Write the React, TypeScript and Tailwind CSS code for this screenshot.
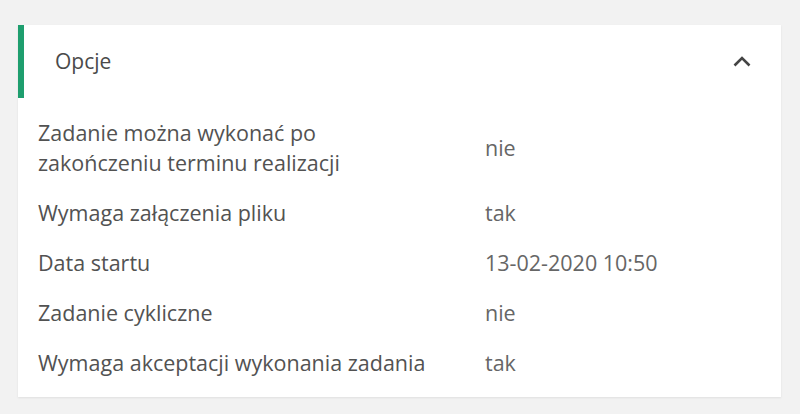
import React from "react";

type Row = {
  label: string;
  value: string;
};

const rows: Row[] = [
  { label: "Zadanie można wykonać po zakończeniu terminu realizacji", value: "nie" },
  { label: "Wymaga załączenia pliku", value: "tak" },
  { label: "Data startu", value: "13-02-2020 10:50" },
  { label: "Zadanie cykliczne", value: "nie" },
  { label: "Wymaga akceptacji wykonania zadania", value: "tak" },
];

const App: React.FunctionComponent = () => {
  return (
    <div
      className="flex min-h-[414px] w-full items-start bg-[#f2f2f2] pt-[25px] pl-[18px] pr-[19px]"
      style={{ fontFamily: '"Open Sans", "Noto Sans", sans-serif' }}
    >
      <div className="flex w-full flex-col bg-white pb-[9px] shadow-[0_1px_2px_rgba(0,0,0,0.08)]">
        <div className="flex h-[73px] shrink-0 items-center justify-between border-l-[6px] border-[#1e9e6e] pl-[31px] pr-[30px]">
          <span className="text-[21px] text-[#4a4a4a]">Opcje</span>
          <svg width="18" height="11" viewBox="0 0 18 11" fill="none">
            <path d="M1.5 9.5 L9 2 L16.5 9.5" stroke="#444" strokeWidth="2.6" />
          </svg>
        </div>
        <div className="flex flex-col pt-[10px]">
          {rows.map((row) => (
            <div key={row.label} className="flex items-center py-[10px] pl-[20px]">
              <div className="w-[447px] pr-[45px] text-[21.5px] leading-[30px] text-[#525252]">
                {row.label}
              </div>
              <div className="text-[21.5px] leading-[30px] text-[#666]">{row.value}</div>
            </div>
          ))}
        </div>
      </div>
    </div>
  );
};

export default App;
